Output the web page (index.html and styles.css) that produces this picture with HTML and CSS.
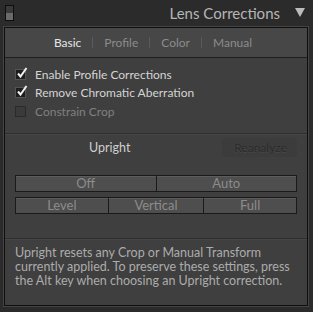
FILE: index.html
```html
<!DOCTYPE html>
<html>
<head>
<meta charset="utf-8">
<link rel="stylesheet" href="styles.css">
</head>
<body>
<div class="header">
  <div class="toggle"><div class="toggle-top"></div></div>
  <div class="title">Lens Corrections</div>
  <div class="arrow"></div>
</div>
<div class="panel">
  <div class="tabs">
    <span class="tab active">Basic</span>
    <span class="sep"></span>
    <span class="tab">Profile</span>
    <span class="sep"></span>
    <span class="tab">Color</span>
    <span class="sep"></span>
    <span class="tab">Manual</span>
  </div>
  <div class="checks">
    <div class="check-row">
      <span class="box"><svg viewBox="0 0 12 12" width="12" height="12"><path d="M2 6.5 L4.5 9.5 L10.5 1" fill="none" stroke="#f0f0f0" stroke-width="2"/></svg></span>
      <span class="label">Enable Profile Corrections</span>
    </div>
    <div class="check-row">
      <span class="box"><svg viewBox="0 0 12 12" width="12" height="12"><path d="M2 6.5 L4.5 9.5 L10.5 1" fill="none" stroke="#f0f0f0" stroke-width="2"/></svg></span>
      <span class="label">Remove Chromatic Aberration</span>
    </div>
    <div class="check-row dim">
      <span class="box"></span>
      <span class="label">Constrain Crop</span>
    </div>
  </div>
  <div class="upright">
    <div class="upright-head">
      <span class="upright-title">Upright</span>
      <span class="reanalyze">Reanalyze</span>
    </div>
    <div class="btn-row">
      <div class="btn">Off</div>
      <div class="btn">Auto</div>
    </div>
    <div class="btn-row three">
      <div class="btn">Level</div>
      <div class="btn">Vertical</div>
      <div class="btn">Full</div>
    </div>
  </div>
  <div class="note">Upright resets any Crop or Manual Transform currently applied. To preserve these settings, press the Alt key when choosing an Upright correction.</div>
</div>
</body>
</html>
```
FILE: styles.css
```css
html, body {
  margin: 0;
  padding: 0;
  background: #2b2b2b;
  font-family: "Lato", "Noto Sans", sans-serif;
  width: 313px;
  height: 312px;
  overflow: hidden;
}
.header {
  height: 27px;
  display: flex;
  align-items: center;
  padding: 0 8px 0 5px;
  box-sizing: border-box;
}
.toggle {
  width: 7px;
  height: 14px;
  border: 1px solid #0e0e0e;
  background: #6a6a6a;
  margin-top: -1px;
}
.toggle-top {
  height: 7px;
  background: #3a3a3a;
}
.title {
  margin-left: auto;
  font-size: 15px;
  color: #b6b6b6;
  margin-right: 15px;
  margin-top: -2px;
}
.arrow {
  width: 0;
  height: 0;
  border-left: 5px solid transparent;
  border-right: 5px solid transparent;
  border-top: 9px solid #bcbcbc;
  margin-top: -2px;
}
.panel {
  margin: 0 5px 0 4px;
  border: 1px solid #0f0f0f;
  background: #3f3f3f;
  height: 277px;
  box-shadow: 0 0 0 1px #444;
}
.tabs {
  height: 29px;
  background: #474747;
  border-bottom: 1px solid #1e1e1e;
  display: flex;
  align-items: center;
  justify-content: center;
  font-size: 12px;
  color: #8c8c8c;
  padding-right: 6px;
}
.tab { padding: 0 11px; }
.tab.active { color: #e6e6e6; }
.sep {
  width: 1px;
  height: 11px;
  background: #5a5a5a;
}
.checks {
  padding: 7px 0 12px 10px;
  border-bottom: 1px solid #2e2e2e;
  box-shadow: 0 1px 0 #464646;
}
.check-row {
  display: flex;
  align-items: center;
  height: 18.5px;
  font-size: 12px;
  color: #d4d4d4;
}
.check-row.dim { color: #808080; }
.box {
  width: 9px;
  height: 9px;
  border: 1px solid #555;
  background: #1d1d1d;
  position: relative;
  margin-right: 9px;
  flex: none;
}
.box svg {
  position: absolute;
  left: 0;
  top: -3px;
}
.check-row.dim .box { background: #3a3a3a; border-color: #2a2a2a; }
.upright {
  padding: 5px 10px 19px 10px;
  border-bottom: 1px solid #2e2e2e;
  box-shadow: 0 1px 0 #464646;
}
.upright-head {
  display: flex;
  align-items: center;
  height: 17px;
  font-size: 12px;
  margin-bottom: 19px;
}
.upright-title {
  color: #cfcfcf;
  margin-left: 74px;
  font-size: 12.5px;
}
.reanalyze {
  margin-left: auto;
  color: #2c2c2c;
  background: #3c3c3c;
  padding: 2px 10px 2px 12px;
  margin-right: 0;
  border-radius: 4px;
  text-shadow: 0 1px 0 #474747;
}
.btn-row {
  display: flex;
  margin-bottom: 5px;
}
.btn {
  flex: 1;
  height: 15px;
  border: 1px solid #1a1a1a;
  background: #4e4e4e;
  box-shadow: inset 0 1px 0 #5c5c5c;
  color: #8c8c8c;
  font-size: 13px;
  line-height: 15px;
  text-align: center;
  margin-right: -1px;
}
.btn-row .btn:last-child { margin-right: 0; }
.btn-row.three .btn:nth-child(2) { flex: 1.03; }
.note {
  padding: 7px 10px 0 10px;
  font-size: 12.5px;
  line-height: 14px;
  color: #acacac;
}
```
